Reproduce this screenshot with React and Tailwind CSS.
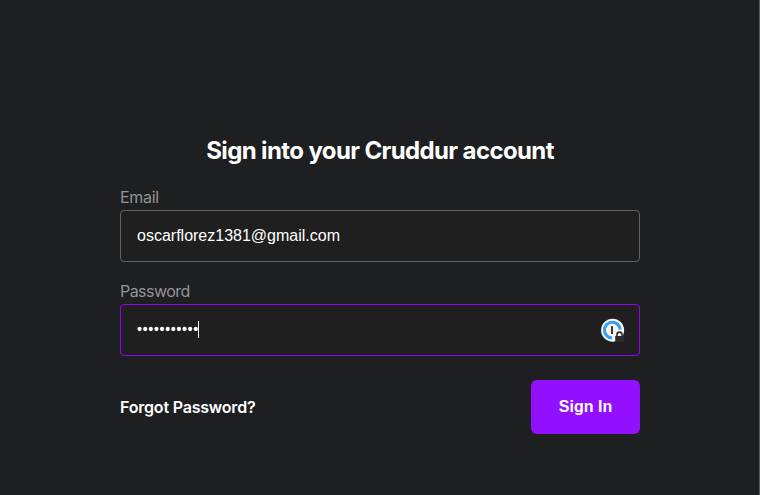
import React from "react";

function PasswordManagerIcon() {
  return (
    <svg width="26" height="26" viewBox="0 0 26 26" className="block">
      <circle cx="12.6" cy="13.2" r="11.5" fill="#f7f7f7" />
      <path
        d="M12.1 21A7.9 7.9 0 1 1 20.2 12.6"
        fill="none"
        stroke="#3b9ff8"
        strokeWidth="3.1"
      />
      <rect x="11" y="9" width="2" height="8" rx="0.5" fill="#3a3a3c" />
      <path d="M17 20v-2.4a2.5 2.5 0 0 1 5 0V20" fill="#f7f7f7" stroke="#2b2b2e" strokeWidth="1.6" />
      <rect x="15.2" y="19" width="8.8" height="6" rx="0.5" fill="#2b2b2e" />
    </svg>
  );
}

function Field({ label, labelClass, focused, children }) {
  return (
    <div className="flex flex-col">
      <label className={"h-[26px] text-base leading-[26px] text-[#949495] " + labelClass}>{label}</label>
      <div
        className={
          "flex h-[52px] items-center rounded border bg-[#1f1f1f] pl-4 pr-[13px] " +
          (focused ? "border-[#9500ff]" : "border-[#626263]")
        }
      >
        {children}
      </div>
    </div>
  );
}

function PasswordDots() {
  return (
    <svg width="61" height="8" viewBox="0 0 61 8" className="block">
      {Array.from({ length: 11 }, (_, i) => (
        <circle key={i} cx={2.6 + i * 5.62} cy="3" r="2.15" fill="#ffffff" />
      ))}
    </svg>
  );
}

export default function App() {
  return (
    <main className="flex h-[495px] w-[760px] justify-between overflow-hidden bg-[#1e1f21] font-['Inter',sans-serif] text-white">
      <form className="ml-[120px] flex w-[520px] flex-col pt-[133px]" onSubmit={(e) => e.preventDefault()}>
        <h1 className="h-[51px] whitespace-nowrap text-center text-2xl font-bold leading-9 tracking-[-0.62px]">
          Sign into your Cruddur account
        </h1>
        <div className="flex flex-col gap-4">
          <Field label="Email" labelClass="tracking-[-0.3px]">
            <span className="font-['Liberation_Sans',Arial,sans-serif] text-base">oscarflorez1381@gmail.com</span>
          </Field>
          <Field label="Password" labelClass="tracking-[-0.55px]" focused>
            <PasswordDots />
            <span className="mb-0.5 h-[17px] w-px bg-white" />
            <span className="ml-auto">
              <PasswordManagerIcon />
            </span>
          </Field>
        </div>
        <div className="mt-6 flex items-center justify-between">
          <a className="text-base font-semibold tracking-[-0.2px]">Forgot Password?</a>
          <button className="h-[54px] w-[109px] rounded-md bg-[#9310ff] font-['Liberation_Sans',Arial,sans-serif] text-base font-bold">
            Sign In
          </button>
        </div>
      </form>
      <div className="w-px shrink-0 bg-[#5a5c5c]" />
    </main>
  );
}
